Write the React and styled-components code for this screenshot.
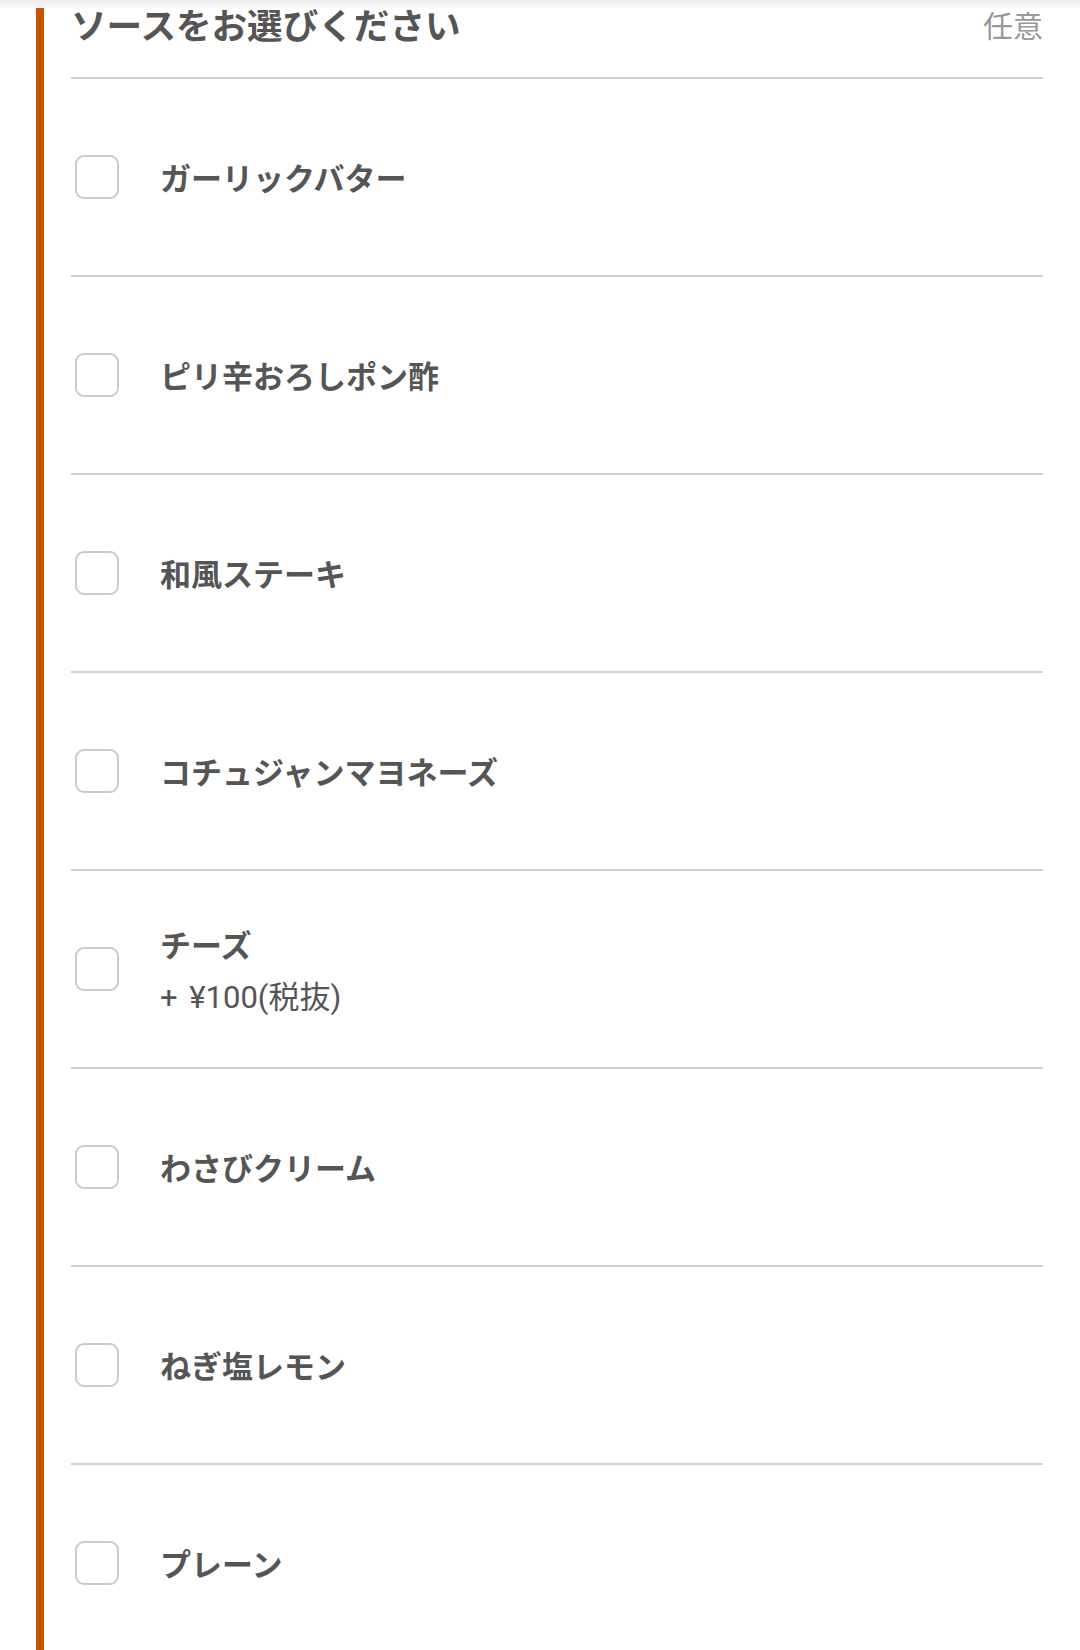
import React from 'react';
import styled, { createGlobalStyle } from 'styled-components';

const GlobalStyle = createGlobalStyle`
  html, body {
    margin: 0;
    padding: 0;
    background: #fff;
  }
  body {
    font-family: Roboto, "Noto Sans CJK JP", "Noto Sans", sans-serif;
    color: #555;
  }
`;

const TopShade = styled.div`
  position: fixed;
  top: 0;
  left: 0;
  right: 0;
  height: 8px;
  background: linear-gradient(to bottom, #ebebeb, #f8f8f8);
  z-index: 2;
`;

const Section = styled.section`
  margin-left: 36px;
  border-left: 8px solid #c25400;
  padding: 0 37px 0 27px;
  min-height: 1650px;
  box-sizing: border-box;
`;

const Header = styled.div`
  display: flex;
  justify-content: space-between;
  align-items: flex-start;
  padding: 10px 0 0;
  height: 67px;
  border-bottom: 2px solid #d0d0d0;
`;

const Title = styled.h2`
  margin: 0;
  font-size: 35.6px;
  line-height: 1;
  font-weight: 700;
  color: #555;
`;

const Badge = styled.span`
  margin-top: 2px;
  font-size: 30px;
  line-height: 1;
  color: #999;
  font-weight: 400;
`;

const OptionList = styled.ul`
  list-style: none;
  margin: 0;
  padding: 0;
`;

const OptionRow = styled.li`
  display: flex;
  align-items: center;
  height: 196px;
  border-bottom: 2px solid #d0d0d0;
  cursor: pointer;
`;

const CheckBox = styled.span`
  flex: 0 0 auto;
  width: 44px;
  height: 44px;
  box-sizing: border-box;
  margin-left: 4px;
  border: 2px solid #cacaca;
  border-radius: 9px;
  background: #fff;
`;

const OptionText = styled.div`
  margin: 6px 0 0 41px;
  display: flex;
  flex-direction: column;
`;

const OptionName = styled.span`
  font-size: 31px;
  line-height: 46px;
  font-weight: 700;
  color: #555;
`;

const OptionPrice = styled.span`
  margin-top: 5px;
  font-size: 31px;
  line-height: 46px;
  font-weight: 400;
  word-spacing: 4px;
  color: #555;
`;

const sauces = [
  { name: 'ガーリックバター' },
  { name: 'ピリ辛おろしポン酢' },
  { name: '和風ステーキ' },
  { name: 'コチュジャンマヨネーズ' },
  { name: 'チーズ', price: '+ ¥100(税抜)' },
  { name: 'わさびクリーム' },
  { name: 'ねぎ塩レモン' },
  { name: 'プレーン' },
];

export default function App() {
  return (
    <>
      <GlobalStyle />
      <TopShade />
      <Section>
        <Header>
          <Title>ソースをお選びください</Title>
          <Badge>任意</Badge>
        </Header>
        <OptionList>
          {sauces.map(({ name, price }) => (
            <OptionRow key={name}>
              <CheckBox />
              <OptionText>
                <OptionName>{name}</OptionName>
                {price && <OptionPrice>{price}</OptionPrice>}
              </OptionText>
            </OptionRow>
          ))}
        </OptionList>
      </Section>
    </>
  );
}
